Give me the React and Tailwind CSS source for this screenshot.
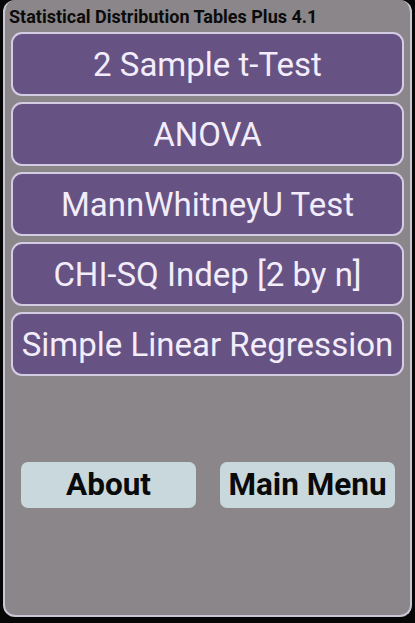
import React from "react";

const items = [
  "2 Sample t-Test",
  "ANOVA",
  "MannWhitneyU Test",
  "CHI-SQ Indep [2 by n]",
  "Simple Linear Regression",
];

const App = () => {
  return (
    <div
      className="w-[415px] h-[623px] bg-[#070707] pl-[3px] pr-[3px] pb-[6px] overflow-hidden"
      style={{ fontFamily: "Roboto, 'Liberation Sans', sans-serif" }}
    >
      {/* Main panel */}
      <div className="h-full rounded-[12px] border-[2px] border-t-0 border-[#c9c7d3] bg-[#8a8689] flex flex-col">
        <div className="pl-[4px] h-[32px] pt-[7px] text-[18px] leading-[20px] font-bold text-[#0b0b0b] whitespace-nowrap">
          Statistical Distribution Tables Plus 4.1
        </div>
        {/* Test buttons */}
        <div className="flex flex-col gap-[6px] px-[6px]">
          {items.map((label) => (
            <button
              key={label}
              className="h-[64px] w-full rounded-[11px] border-[2px] border-[#d4cce3] bg-[#665383] text-[#f3ecfb] text-[33px] leading-none flex items-center justify-center whitespace-nowrap"
            >
              {label}
            </button>
          ))}
        </div>
        {/* Bottom buttons */}
        <div className="flex justify-between pl-[16px] pr-[15px] mt-[86px]">
          <button className="w-[175px] h-[46px] rounded-[7px] bg-[#c9d8dc] text-[31.5px] font-bold text-[#0a0a0a] leading-none whitespace-nowrap">
            About
          </button>
          <button className="w-[175px] h-[46px] rounded-[7px] bg-[#c9d8dc] text-[31.5px] font-bold text-[#0a0a0a] leading-none whitespace-nowrap">
            Main Menu
          </button>
        </div>
      </div>
    </div>
  );
};

export default App;
